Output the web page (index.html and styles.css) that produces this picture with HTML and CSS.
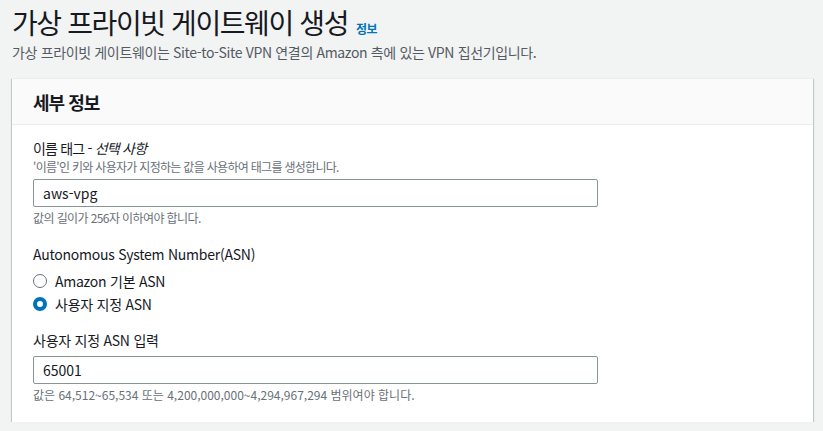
FILE: index.html
```html
<!DOCTYPE html>
<html lang="ko">
<head>
<meta charset="utf-8">
<link rel="stylesheet" href="styles.css">
</head>
<body>
<div class="page">
  <div class="page-head">
    <h1 class="title">가상 프라이빗 게이트웨이 생성</h1>
    <a class="info" href="#">정보</a>
  </div>
  <p class="subtitle">가상 프라이빗 게이트웨이는 Site-to-Site VPN 연결의 Amazon 측에 있는 VPN 집선기입니다.</p>

  <section class="panel">
    <div class="panel-head"><h2>세부 정보</h2></div>
    <div class="panel-body">
      <div class="field">
        <div class="label label-ko">이름 태그 - <i>선택 사항</i></div>
        <div class="desc">'이름'인 키와 사용자가 지정하는 값을 사용하여 태그를 생성합니다.</div>
        <div class="input">aws-vpg</div>
        <div class="hint hint-ko">값의 길이가 256자 이하여야 합니다.</div>
      </div>
      <div class="field">
        <div class="label">Autonomous System Number(ASN)</div>
        <div class="radios">
          <div class="radio"><span class="dot"></span><span>Amazon 기본 ASN</span></div>
          <div class="radio"><span class="dot on"></span><span>사용자 지정 ASN</span></div>
        </div>
      </div>
      <div class="field">
        <div class="label">사용자 지정 ASN 입력</div>
        <div class="input">65001</div>
        <div class="hint">값은 64,512~65,534 또는 4,200,000,000~4,294,967,294 범위여야 합니다.</div>
      </div>
    </div>
  </section>
</div>
</body>
</html>
```
FILE: styles.css
```css
html, body {
  margin: 0;
  padding: 0;
  background: #f2f3f3;
  font-family: "Noto Sans CJK KR", "Noto Sans", sans-serif;
  color: #16191f;
}
.page {
  padding: 4px 10px 0 12px;
}
.page-head {
  display: flex;
  align-items: baseline;
  gap: 8px;
}
.title {
  margin: 0;
  font-size: 28px;
  font-weight: 400;
  line-height: 36px;
  letter-spacing: -1.4px;
  color: #16191f;
}
.info {
  font-size: 12px;
  font-weight: 700;
  color: #0073bb;
  text-decoration: none;
  letter-spacing: -0.5px;
}
.subtitle {
  margin: 2px 0 0;
  font-size: 14px;
  line-height: 20px;
  letter-spacing: -0.35px;
  color: #545b64;
}
.panel {
  margin-top: 16px;
  background: #fff;
  border-top: 1px solid #eaeded;
  box-shadow: 0 1px 1px 0 rgba(0, 28, 36, 0.3), 1px 1px 1px 0 rgba(0, 28, 36, 0.15), -1px 1px 1px 0 rgba(0, 28, 36, 0.15);
}
.panel-head {
  background: #fafafa;
  border-bottom: 1px solid #eaeded;
  padding: 12px 20px 11px 21px;
}
.panel-head h2 {
  margin: 0;
  font-size: 18px;
  font-weight: 700;
  line-height: 22px;
  letter-spacing: -1px;
}
.panel-body {
  padding: 12px 20px 18px 21px;
}
.field + .field {
  margin-top: 16px;
}
.label {
  font-size: 14px;
  line-height: 22px;
  letter-spacing: -0.25px;
  color: #16191f;
}
.label-ko {
  letter-spacing: -0.8px;
}
.desc {
  font-size: 12px;
  line-height: 16px;
  letter-spacing: -0.7px;
  color: #687078;
}
.input {
  margin-top: 4px;
  width: 565px;
  height: 28px;
  box-sizing: border-box;
  border: 1px solid #879596;
  border-radius: 2px;
  padding: 0 9px;
  font-size: 14px;
  line-height: 26px;
  color: #16191f;
}
.label + .input {
  margin-top: 5px;
}
.hint {
  margin-top: 2px;
  font-size: 12px;
  line-height: 18px;
  color: #687078;
}
.hint-ko {
  letter-spacing: -0.6px;
}
.radios {
  margin-top: 6px;
  margin-bottom: -1px;
  display: flex;
  flex-direction: column;
  gap: 3px;
}
.radio {
  display: flex;
  align-items: center;
  gap: 8px;
  font-size: 14px;
  line-height: 20px;
  letter-spacing: -0.25px;
}
.dot {
  width: 14px;
  height: 14px;
  box-sizing: border-box;
  border-radius: 50%;
  border: 1px solid #687078;
  background: #fff;
}
.dot.on {
  border: 4px solid #0073bb;
}
```
